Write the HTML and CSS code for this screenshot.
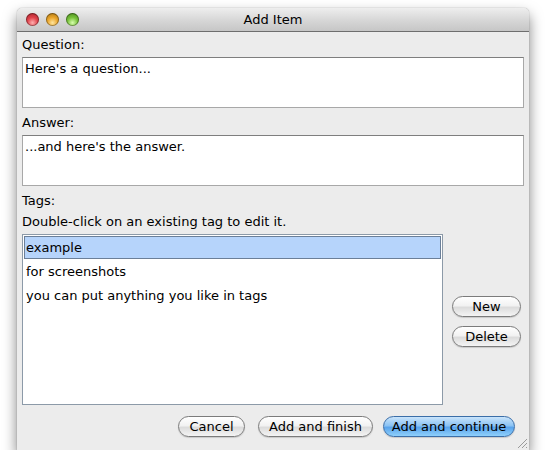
FILE: index.html
```html
<!DOCTYPE html>
<html>
<head>
<meta charset="utf-8">
<link rel="stylesheet" href="styles.css">
</head>
<body>
<div class="window">
  <div class="titlebar">
    <div class="lights">
      <span class="light red"></span>
      <span class="light yellow"></span>
      <span class="light green"></span>
    </div>
    <div class="title">Add Item</div>
  </div>
  <div class="content">
    <div class="label first">Question:</div>
    <div class="textbox">Here's a question...</div>
    <div class="label">Answer:</div>
    <div class="textbox">...and here's the answer.</div>
    <div class="label">Tags:</div>
    <div class="label hint">Double-click on an existing tag to edit it.</div>
    <div class="tags-row">
      <div class="list">
        <div class="item selected">example</div>
        <div class="item">for screenshots</div>
        <div class="item">you can put anything you like in tags</div>
      </div>
      <div class="side">
        <button class="btn side-btn">New</button>
        <button class="btn side-btn">Delete</button>
      </div>
    </div>
    <div class="actions">
      <button class="btn cancel">Cancel</button>
      <button class="btn finish">Add and finish</button>
      <button class="btn default">Add and continue</button>
    </div>
  </div>
  <div class="grip">
    <svg width="12" height="12" viewBox="0 0 12 12">
      <line x1="2" y1="11" x2="11" y2="2" stroke="#9a9a9a" stroke-width="1"/>
      <line x1="6" y1="11" x2="11" y2="6" stroke="#9a9a9a" stroke-width="1"/>
      <line x1="10" y1="11" x2="11" y2="10" stroke="#9a9a9a" stroke-width="1"/>
    </svg>
  </div>
</div>
</body>
</html>
```

FILE: styles.css
```css
html, body {
  margin: 0;
  padding: 0;
  background: #ffffff;
}
body {
  padding: 8px 16px 0 17px;
  font-family: "DejaVu Sans", "Liberation Sans", sans-serif;
  font-size: 13px;
  color: #000;
}
.window {
  position: relative;
  width: 512px;
  height: 442px;
  background: #ececec;
  border-radius: 5px 5px 0 0;
  box-shadow: 0 7px 14px rgba(0,0,0,0.5), 0 0 1px rgba(0,0,0,0.5);
  display: flex;
  flex-direction: column;
}
.titlebar {
  height: 23px;
  border-radius: 5px 5px 0 0;
  background: linear-gradient(#eeeeee, #d6d6d6 55%, #c6c6c6);
  border-bottom: 1px solid #6e6e6e;
  display: flex;
  align-items: center;
  position: relative;
}
.lights {
  display: flex;
  gap: 7px;
  padding-left: 9px;
}
.light {
  width: 13px;
  height: 13px;
  border-radius: 50%;
  box-shadow: inset 0 0 0 1px rgba(0,0,0,0.35);
}
.red { background: radial-gradient(circle at 50% 75%, #ffb0b0 0%, #e0424b 45%, #9b1c24 100%); }
.yellow { background: radial-gradient(circle at 50% 75%, #ffe5a0 0%, #eaa52a 45%, #9c6a0d 100%); }
.green { background: radial-gradient(circle at 50% 75%, #d8ffb0 0%, #78c23a 45%, #3f7d16 100%); }
.title {
  position: absolute;
  left: 0;
  right: 0;
  text-align: center;
  font-size: 13px;
  pointer-events: none;
}
.content {
  flex: 1;
  padding: 0 5px;
  display: flex;
  flex-direction: column;
}
.label {
  height: 25px;
  line-height: 26px;
  margin-top: 2px;
}
.label.first {
  margin-top: 0;
}
.textbox {
  height: 51px;
  box-sizing: border-box;
  background: #fff;
  border: 1px solid #a8a8a8;
  border-top-color: #7e7e7e;
  padding: 3px 2px;
  line-height: 16px;
}
.hint {
  height: 21px;
  margin-top: 0;
  line-height: 17px;
}
.tags-row {
  display: flex;
  align-items: center;
  height: 171px;
}
.list {
  width: 421px;
  height: 171px;
  box-sizing: border-box;
  background: #fff;
  border: 1px solid #8c9aa8;
  padding: 1px;
}
.item {
  height: 24px;
  line-height: 23px;
  padding-left: 2px;
}
.item.selected {
  height: 23px;
  line-height: 22px;
  margin-bottom: 1px;
  background: #b6d4fb;
  border: 1px solid #6b7f98;
  box-sizing: border-box;
  padding-left: 1px;
}
.side {
  flex: 1;
  display: flex;
  flex-direction: column;
  align-items: flex-end;
  gap: 9px;
  padding-right: 3px;
  padding-top: 4px;
}
.btn {
  font-family: "DejaVu Sans", "Liberation Sans", sans-serif;
  font-size: 13px;
  height: 21px;
  padding: 0 10px;
  border: 1px solid #7b7b7b;
  border-radius: 11px;
  background: linear-gradient(#ffffff 0%, #f2f2f2 45%, #dcdcdc 55%, #f4f4f4 100%);
  box-shadow: 0 1px 1px rgba(0,0,0,0.15);
  color: #000;
  line-height: 18px;
}
.side-btn {
  width: 69px;
  padding: 0;
}
.actions {
  display: flex;
  justify-content: flex-end;
  padding: 11px 9px 0 0;
}
.cancel {
  width: 67px;
  padding: 0;
}
.finish {
  width: 115px;
  padding: 0;
  margin-left: 13px;
}
.btn.default {
  width: 132px;
  padding: 0;
  margin-left: 10px;
  background: linear-gradient(#c9e4fb 0%, #8cc3f3 45%, #5aa4ec 55%, #8fd0fb 100%);
  border-color: #3b6ea8;
}
.grip {
  position: absolute;
  right: 1px;
  bottom: 1px;
  width: 12px;
  height: 12px;
}
.grip svg { display: block; }
```
